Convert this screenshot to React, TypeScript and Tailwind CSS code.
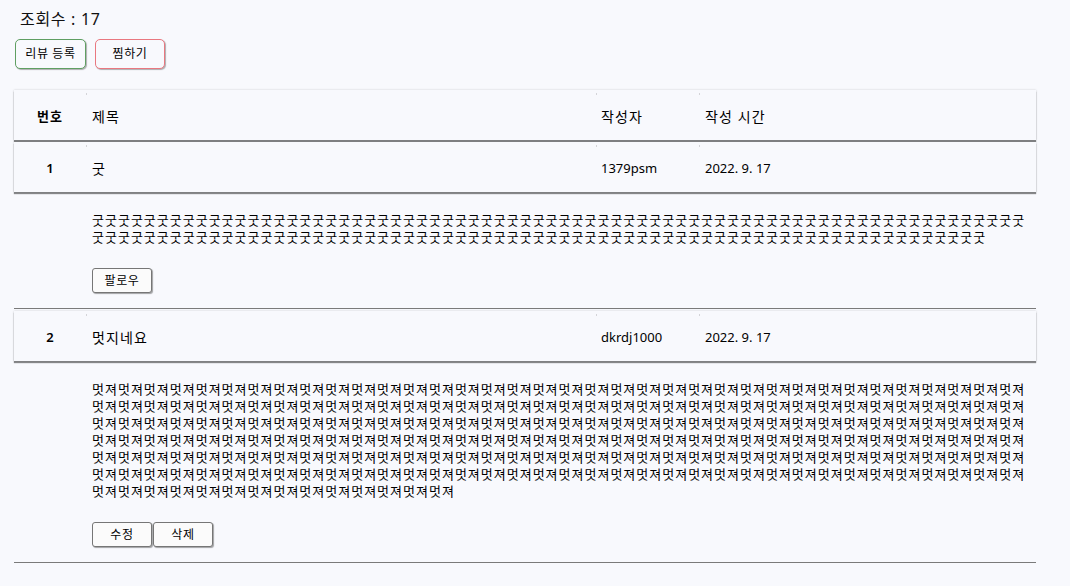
import React from "react";

const font = "font-['Noto_Sans','Noto_Sans_CJK_KR',sans-serif]";

type Review = {
  no: number;
  title: string;
  author: string;
  date: string;
  body: string;
  mine: boolean;
};

const reviews: Review[] = [
  { no: 1, title: "굿", author: "1379psm", date: "2022. 9. 17", body: "굿".repeat(141), mine: false },
  { no: 2, title: "멋지네요", author: "dkrdj1000", date: "2022. 9. 17", body: "멋져".repeat(230), mine: true },
];

function Tick() {
  return <span className="absolute left-0 top-0 h-[2px] w-px bg-[#d4d4d8]" />;
}

function Row({ cells, header }: { cells: [React.ReactNode, string, string, string]; header?: boolean }) {
  const hangul = "text-[14px] tracking-[1.1px]";
  const latin = "text-[13px]";
  return (
    <div className="flex h-[50px] items-stretch bg-[#f8f9fd] pt-[3px] text-black shadow-[0_0_2px_rgba(0,0,0,0.18),0_2px_1px_rgba(0,0,0,0.45)]">
      <div
        className={
          "flex w-[72px] items-center justify-center " +
          (header ? "text-[13px] font-bold tracking-[1px]" : "text-[13px] font-semibold")
        }
      >
        {cells[0]}
      </div>
      <div className={"relative flex w-[510px] items-center pl-[6px] " + hangul}>
        <Tick />
        {cells[1]}
      </div>
      <div className={"relative flex w-[103px] items-center pl-[5px] " + (header ? hangul : latin)}>
        <Tick />
        {cells[2]}
      </div>
      <div className={"relative flex flex-1 items-center pl-[6px] " + (header ? hangul : latin)}>
        <Tick />
        {cells[3]}
      </div>
    </div>
  );
}

function SmallButton({ children }: { children: React.ReactNode }) {
  return (
    <button className="h-[25px] w-[60px] rounded-[3px] border border-[#767676] bg-[#fbfbfb] text-[12px] leading-none tracking-[0.6px] text-black shadow-[1px_1px_1px_rgba(0,0,0,0.35)]">
      {children}
    </button>
  );
}

export default function App() {
  return (
    <div className={"min-h-screen bg-[#f8f9fd] pl-[14px] pt-[8px] text-[#111] " + font}>
      <div className="pl-[6px] text-[16px] leading-[22px] tracking-[0.7px]">조회수 : 17</div>

      <div className="mt-[9px] flex gap-[9px] pl-px">
        <button className="h-[30px] w-[71px] rounded-[5px] border border-[#5f9f62] bg-[#f8f9fd] text-[12px] tracking-[0.6px] text-black shadow-[1px_1px_1px_rgba(0,0,0,0.3)]">
          리뷰 등록
        </button>
        <button className="h-[30px] w-[70px] rounded-[5px] border border-[#e97880] bg-[#f8f9fd] text-[12px] tracking-[0.6px] text-black shadow-[1px_1px_1px_rgba(0,0,0,0.3)]">
          찜하기
        </button>
      </div>

      <div className="mt-[21px] w-[1022px]">
        <Row header cells={["번호", "제목", "작성자", "작성 시간"]} />

        {reviews.map((r) => (
          <div key={r.no} className="mt-[2px]">
            <Row cells={[r.no, r.title, r.author, r.date]} />
            <div className="border-b border-[#7a7a7a] pb-[15px] pl-[78px] pr-[8px] pt-[20px]">
              <p className="text-[13px] leading-[17px] tracking-[1px] text-black">{r.body}</p>
              <div className="mt-[22px] flex gap-px">
                {r.mine ? (
                  <>
                    <SmallButton>수정</SmallButton>
                    <SmallButton>삭제</SmallButton>
                  </>
                ) : (
                  <SmallButton>팔로우</SmallButton>
                )}
              </div>
            </div>
          </div>
        ))}
      </div>
    </div>
  );
}
